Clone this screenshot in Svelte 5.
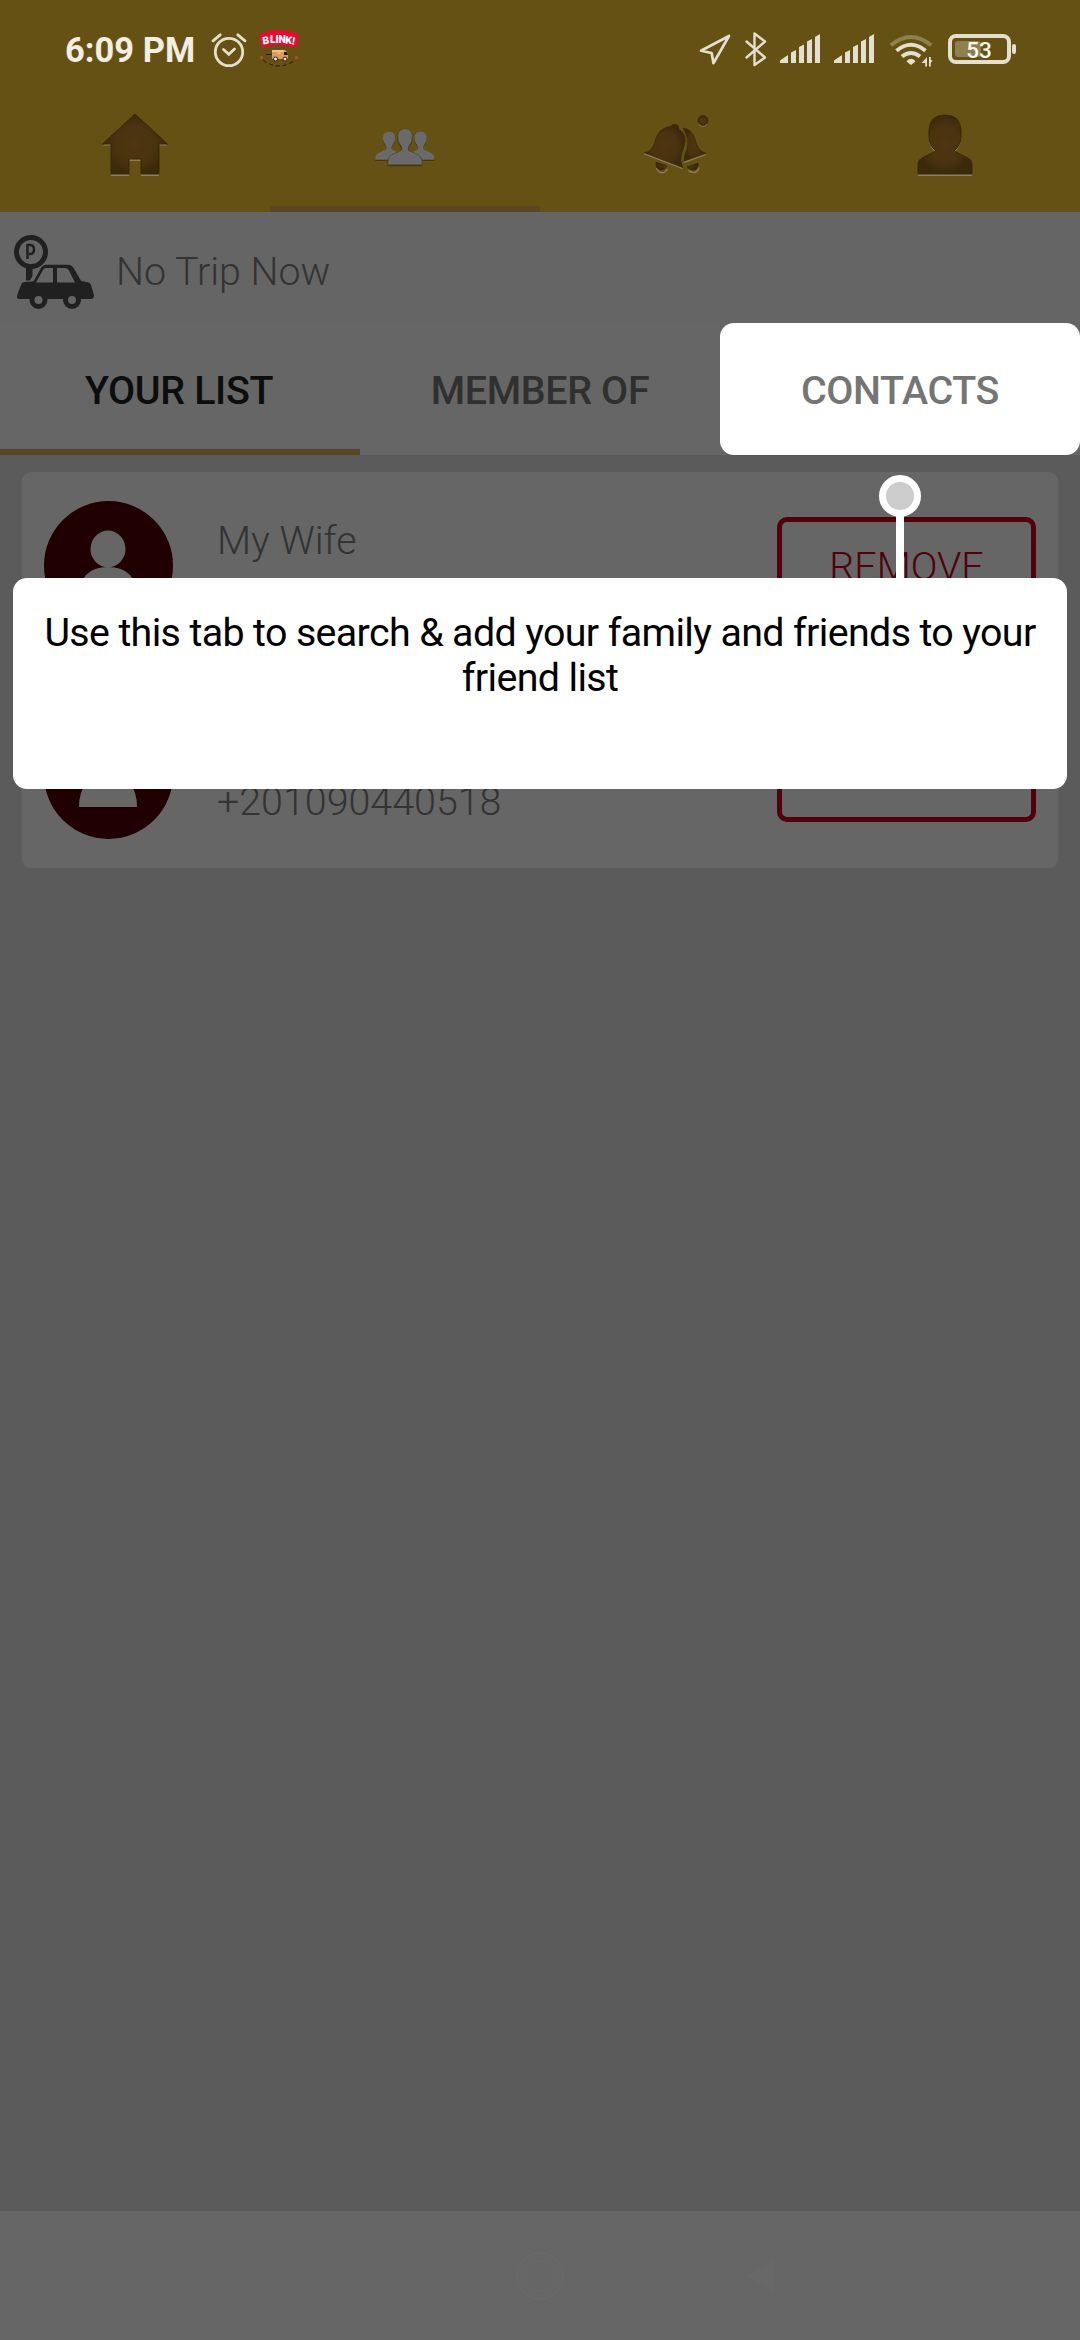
<script>
  const friends = [
    { name: 'My Wife', phone: '' },
    { name: '', phone: '+201090440518' }
  ];
</script>

<div class="screen">
  <header>
    <div class="status">
      <span class="time">6:09 PM</span>
      <svg class="alarm" width="36" height="36" viewBox="211 32 36 36" fill="none" stroke="#e4dfcf" stroke-linecap="round">
        <circle cx="229" cy="52" r="13.7" stroke-width="2.8" />
        <path d="M223.5 49.5l5.3 4.8 5.7-5.3M213 40.8l7.2-6M245 40.8l-7.2-6" stroke-width="2.8" />
      </svg>
      <svg class="blink" width="42" height="42" viewBox="258 27 42 42">
        <path d="M258.5 35Q279 24.500 299.500 35L296 48Q278 42 262.500 48z" fill="#e80a32" />
        <g class="blinktext"><text x="263" y="44.500" transform="rotate(-9 263 44.500)">B</text><text x="270" y="43">L</text><text x="275.500" y="42.500">I</text><text x="278.500" y="42.500">N</text><text x="285" y="43.500" transform="rotate(5 285 43.500)">K</text><text x="291.500" y="44.500" transform="rotate(9 291.500 44.500)">!</text></g>
        <path d="M272 50h13l3 3v6h-16z" fill="#dc9a62" /><path d="M272 50h12v2h-12z" fill="#efbd88" />
        <path d="M284 52h3l1 3h-4zM266 54h6v1h-6z" fill="#2c160e" /><path d="M277 54l2-2 2 2z" fill="#f4cf25" />
        <circle cx="275.500" cy="59" r="2" fill="#eee" stroke="#31190e" /><circle cx="285" cy="59" r="2" fill="#eee" stroke="#31190e" />
        <path d="M263 60q16 12 32 0" fill="none" stroke="#24190d" stroke-dasharray="4 3" />
        <path d="M260 56h3v3h-3zM295 56h3v3h-3z" fill="#b34a2b" />
      </svg>
      <svg class="system" width="320" height="40" viewBox="696 30 320 40">
        <g fill="none" stroke="#e4dfcf" stroke-width="2.700" stroke-linejoin="round" stroke-linecap="round">
          <path d="M701 50.800L729 36 713.500 63.200 711.600 53z" />
          <path d="M746.500 41.500L765 57.500 754.500 65V33.500L765 41.500 746.500 57.500" stroke-width="2.400" />
          <rect x="950" y="36" width="59" height="26" rx="6" stroke-width="4" />
        </g>
        <g fill="#e4dfcf">
          {#each [780, 834] as x}
            <path d={`M${x} 63v-2.500l8-5.500v8zM${x + 11} 63V52.500l5-2.500v13zM${x + 19} 63V47l5-2.500V63zM${x + 27} 63V41.500l5-2.500v24zM${x + 35} 63V37l5-3v29z`} />
          {/each}
          <path d="M906.500 61.500l4.500 3.500 4.500-3.500a5 5 0 0 0-9 0z" />
          <path d="M927 57v9.500h-1.800V63h-3.700zM929 57h1.800v3.200h2l-2 2.600v3.700H929z" />
          <rect x="1012" y="44" width="4" height="10" rx="2" />
        </g>
        <g fill="none" stroke="#e4dfcf" stroke-width="4">
          <path d="M890.800 45.200q20.200-16.500 40.400 0" stroke="#8e8050" />
          <path d="M896.500 50.800q14.500-12 29 0M902 56.500q9-7 18 0" />
        </g>
        <rect x="955" y="41" width="26" height="16" rx="3" fill="#8e8050" />
        <text class="batt" x="979" y="57.600" text-anchor="middle">53</text>
      </svg>
    </div>
    <nav class="mainnav">
      <div><svg width="68" height="66" viewBox="101 112 68 66">
        <path d="M135 116L167.500 145.500H159V176H141V161H129V176H111V145.500H102.500z" fill="#8c8060" />
        <path d="M135 114L167.500 144H159V174H141V159H129V174H111V144H102.500z" fill="url(#brown)" stroke="#392808" />
      </svg></div>
      <div class="selected"><svg width="64" height="42" viewBox="373 124 64 42">
        {#each [{ y: 1.3, c: '#41390f' }, { y: 0, c: '#6a6a6a' }] as layer}
          <g fill={layer.c} transform={`translate(0 ${layer.y})`}>
            <path d="M375.300 158.800v-2q0-4 5-5.500l5.500-2.800q1.500-1.500-.3-4.500-3-4-2.500-8.500.5-4.800 6-4.800t6 4.800q.5 4.500-2.500 8.500-1.800 3-.3 4.500l4 2.300v8z" />
            <path d="M434.300 158.800v-2q0-4-5-5.500l-5.500-2.800q-1.500-1.500.3-4.500 3-4 2.500-8.500-.5-4.800-6-4.800t-6 4.800q-.5 4.500 2.500 8.500 1.800 3 .3 4.500l-4 2.300v8z" />
          </g>
        {/each}
        <path d="M387.500 165.200v-4q0-6 6-8l6.500-3q2-2 0-5-3.500-4-3-10 .8-7.200 7.800-7.200t7.800 7.200q.5 6-3 10-2 3 0 5l6.500 3q6 2 6 8v4z" fill="#41390f" />
        <path d="M388 163.700v-3q0-6 6-8l7-3q2-2 0-5-3.800-4-3.300-10 .6-7 7.300-7t7.300 7q.5 6-3.300 10-2 3 0 5l7 3q6 2 6 8v3z" fill="#6a6a6a" stroke="#544b22" stroke-width=".7" />
      </svg></div>
      <div><svg width="68" height="66" viewBox="643 112 68 66">
        <g fill="none" stroke="#8c8060" stroke-width="1.300"><path d="M644 153.700l38.500 14.800M684 162.300l22-7.800M656.500 168q2 5 6 4.700 3 0 5-4M688.500 170.500q2 2 5.500 2 4-.5 5-5M699 124q4 4 8 0" /></g>
        <g fill="url(#brown)" stroke="#392808" stroke-width=".7">
          <path d="M644 152.500q7 0 10-8 3-13 10-16 4-2 7-2 1-3 4-2 4 0 4 5 7 4 6 12-1 6-3 11-3 8 1 15z" />
          <path d="M684 161q0-6 3-12 3-10-4-21 9 1 12 11 3 13 11 14z" />
          <path d="M656 162l11 4q-3 5-7 4-5-2-4-8zM687 167l11-4q1 5-3 7-4 1-8-3z" /><circle cx="703" cy="120.500" r="5" />
        </g>
      </svg></div>
      <div><svg width="58" height="66" viewBox="916 112 58 66">
        <path d="M918 176v-11q0-4 4-6l13-7q-6-6-6-13h32q0 7-6 13l13 7q4 2 4 6v11z" fill="#8c8060" />
        <path d="M918 174v-10q0-4 4-6l14-7q-7-6-7-14v-7q1-15 16-15 15 0 16 15v7q0 8-7 14l14 7q4 2 4 6v10z" fill="url(#brown)" stroke="#392808" />
        <defs><radialGradient id="brown"><stop offset="0" stop-color="#4f3512" /><stop offset=".6" stop-color="#4b3310" /><stop offset="1" stop-color="#3b290b" /></radialGradient></defs>
      </svg></div>
    </nav>
  </header>

  <section class="trip">
    <svg width="82" height="76" viewBox="13 234 82 76">
      <circle cx="31" cy="252" r="14.500" fill="none" stroke="#202020" stroke-width="5" />
      <path d="M27.500 259v-14H30q4 0 4 4.500T30 254h-1" fill="none" stroke="#202020" stroke-width="2.500" />
      <path d="M26 266h6.500v10l-2.500 4.500h-4z" fill="#202020" />
      <path fill-rule="evenodd" d="M17 297q0-3 5-14 1-1 4-1.200h5l3-1 7-13q2-3 5-3h22q4 0 6 4l7 12 5 1.200q4 0 5 3l3 10q0 4-3 4H20q-3 0-3-2zM36 282.500h17V268h-7q-2 0-3 2zM57 282.500h18l-6-12q-1-2.500-4-2.500h-8z" fill="#202020" />
      <circle cx="38.500" cy="300" r="6.500" fill="#656565" stroke="#202020" stroke-width="5" />
      <circle cx="72" cy="300" r="6.500" fill="#656565" stroke="#202020" stroke-width="5" />
    </svg>
    <span>No Trip Now</span>
  </section>

  <nav class="tabs">
    <div class="tab active">YOUR LIST</div>
    <div class="tab">MEMBER OF</div>
    <div class="tab spot">CONTACTS</div>
  </nav>

  <main>
    <div class="card">
      {#each friends as f}
        <div class="friend">
          <svg width="129" height="129" viewBox="0 0 129 129">
            <circle cx="64.500" cy="64.500" r="64.500" fill="#200000" />
            <ellipse cx="64" cy="48" rx="17.500" ry="18.500" fill="#666" />
            <path d="M35 97q0-31 29-31t29 31z" fill="#666" />
          </svg>
          <div class="info"><span>{f.name}</span><span>{f.phone}</span></div>
          <div class="remove">{f.name ? 'REMOVE' : ''}</div>
        </div>
      {/each}
    </div>
  </main>

  <footer>
    <svg width="50" height="50" viewBox="0 0 50 50" fill="none" stroke="#696969" stroke-width="2"><circle cx="25" cy="25" r="23" /><circle cx="25" cy="25" r="15" stroke-width="1" /></svg>
    <svg class="back" width="30" height="36" viewBox="0 0 30 36"><path d="M1 18L28 2v32z" fill="#686868" /></svg>
  </footer>

  <div class="pointer"><i></i><b></b></div>
  <div class="tooltip">Use this tab to search &amp; add your family and friends to your friend list</div>
</div>

<style>
  :global(body) { margin: 0; background: #5b5b5b; }
  .screen { position: relative; display: flex; flex-direction: column; width: 1080px; height: 2340px; overflow: hidden; background: #5b5b5b; font-family: Roboto, "Liberation Sans", sans-serif; font-size: 39.4px; box-sizing: border-box; }
  .screen :global(svg) { display: block; flex: none; }
  header { height: 212px; background: #665115; display: flex; flex-direction: column; flex: none; }
  .status { height: 100px; display: flex; align-items: center; padding: 0 64px 0 65px; box-sizing: border-box; }
  .time { width: 146px; font-size: 34.5px; font-weight: 700; color: #f2eee2; white-space: nowrap; }
  .blink { margin-left: 11px; margin-top: -4px; }
  .system { margin-left: auto; }
  .blinktext { fill: #fff; font-size: 10.500px; font-weight: 900; }
  .batt { fill: #fbf8ed; font-size: 22.5px; font-weight: 500; }
  .mainnav { height: 112px; display: grid; grid-template-columns: repeat(4, 1fr); }
  .mainnav div { display: flex; justify-content: center; align-items: center; padding-bottom: 22px; box-sizing: border-box; }
  .mainnav div:nth-child(3) { padding-left: 4px; }
  .mainnav .selected { border-bottom: 6px solid #594823; padding-bottom: 15px; }
  .trip { height: 111px; box-sizing: border-box; background: #656565; display: flex; align-items: center; flex: none; padding: 8px 0 0 13px; color: #333; font-weight: 300; gap: 21px; }
  .tabs { height: 132px; display: grid; grid-template-columns: repeat(3, 1fr); background: #666; flex: none; }
  .tab { display: flex; align-items: center; justify-content: center; font-weight: 500; letter-spacing: -.35px; color: #303030; padding-top: 2px; }
  .active { color: #0d0d0d; border-bottom: 6px solid #594823; padding: 8px 2px 0 0; }
  .spot { color: #757575; background: #fff; border-radius: 14px; }
  main { padding: 17px 22px; flex: 1; }
  .card { background: #666; border-radius: 9px; padding: 29px 22px; display: flex; flex-direction: column; gap: 80px; }
  .friend { height: 129px; display: flex; align-items: flex-start; color: #333; font-weight: 300; }
  .info { margin-left: 44px; padding-top: 14px; display: grid; grid-template-rows: 52px 52px; line-height: 52px; flex: 1; }
  .remove { width: 259px; height: 96px; margin-top: 16px; box-sizing: border-box; border: 5px solid #52000b; border-radius: 10px; color: #52000b; display: flex; align-items: center; justify-content: center; padding-top: 2px; }
  footer { height: 129px; background: #666; flex: none; display: flex; align-items: center; padding-left: 515px; gap: 181px; box-sizing: border-box; }
  .pointer { position: absolute; left: 879px; top: 475px; width: 42px; display: flex; flex-direction: column; align-items: center; }
  .pointer i { box-sizing: border-box; width: 42px; height: 42px; border: 7px solid #fff; background: #ccc; border-radius: 50%; }
  .pointer b { width: 8px; height: 65px; background: #fff; margin-top: -2px; }
  .tooltip { position: absolute; left: 13px; top: 578px; width: 1054px; height: 211px; box-sizing: border-box; padding: 32px 26px; border-radius: 14px; background: #fff; color: #000; text-align: center; line-height: 45px; letter-spacing: -.64px; }
</style>
